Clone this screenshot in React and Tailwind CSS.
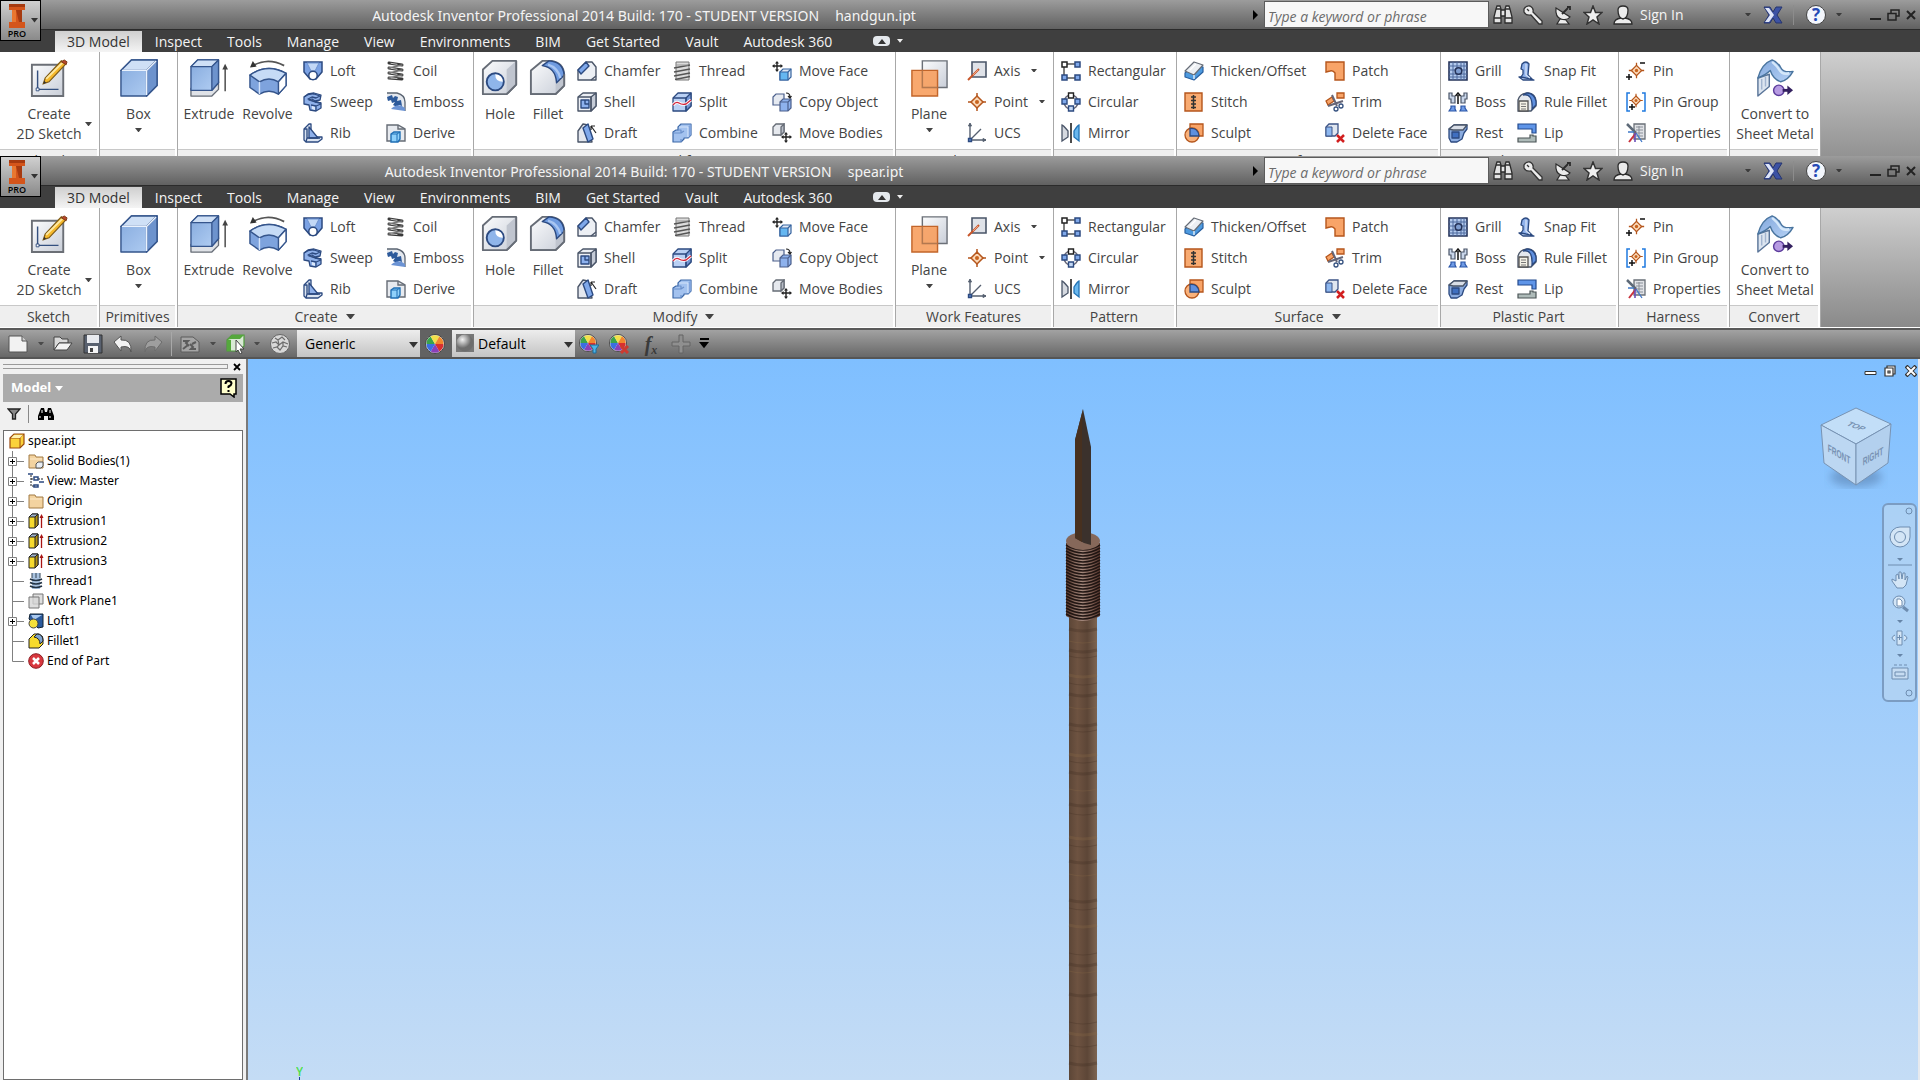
import { useState } from 'react'

const NAVY = '#2c4a80'
const SLATE = '#4a5568'
const RUST = '#b5561c'

/* ---------- 20px ribbon icons ---------- */

const cursorCross = (
  <path
    d="M5 0l2 2.500H5.700V4.300H8.500V3L11 5 8.500 7V5.700H5.700V8.500H7L5 11 3 8.500h1.300V5.700H2.500V7L0 5l2.500-2v1.300h1.800V2.500H3z"
    fill="#222"
  />
)

const target = (
  <g>
    <path d="M10 1v18M1 10h18" stroke={RUST} strokeWidth="1.500" />
    <path d="M10 4l6 6-6 6-6-6z" fill="#fcd9b8" stroke={RUST} strokeWidth="1.500" />
    <circle cx="10" cy="10" r="2" fill="#c8641f" />
  </g>
)

const ICONS = {
  loft: (
    <g stroke={NAVY} strokeWidth="1.500">
      <path d="M1 1h18v10l-6 7H7l-6-7z" fill="#7ba2e4" />
      <path d="M4 2h12l-4 8H8z" fill="#c3d8f6" stroke="#6f93cf" strokeWidth="1" />
      <circle cx="10" cy="14.500" r="4.200" fill="#fff" />
    </g>
  ),
  sweep: (
    <g strokeWidth="1.300" stroke={NAVY} strokeLinejoin="round">
      <path d="M1 5l4-3 6-1 7 2-1 5-5 1-3-2-3 1 6 2 6 1v5l-5 3-6-1-1-5-5-1z" fill="#8fb1ea" />
      <path d="M1 5q5-4 10-3l6 2-4 2-4-1-4 2 8 3 5 1" fill="none" />
      <path d="M8 13l5 1 5-2M13 14v5" fill="none" />
      <path d="M9 14l3 1v3l-3-1z" fill="#dce9fb" stroke="none" />
    </g>
  ),
  rib: (
    <g stroke={NAVY} strokeWidth="1.300" strokeLinejoin="round">
      <path d="M1 6l5-5h2v9l6 4h5v2l-4 3H3l-2-2z" fill="#dbe4f1" />
      <path d="M6 4l9 11H6z" fill="#8eb0ea" />
      <path d="M1 6h3v9l-1 4M4 15h13" fill="none" />
    </g>
  ),
  coil: (
    <g fill="none" strokeLinecap="round">
      <path d="M3 2l13 2M3 7l13 2M3 12l13 2M3 17l13 1" stroke="#3a3a3a" strokeWidth="3" />
      <path d="M16 4L3 7M16 9L3 12M16 14L3 17" stroke="#777" strokeWidth="1.500" />
      <path d="M5 2.300l6 1M5 7.300l6 1M5 12.300l6 1M5 17l6 .5" stroke="#c4c4c4" strokeWidth="1" />
    </g>
  ),
  emboss: (
    <g>
      <path d="M1 1h10q8 2 8 9v9q-6-10-18-11z" fill="#e4e8ee" />
      <path d="M1 1h10q8 2 8 9v9" fill="none" stroke="#5a6472" strokeWidth="1.300" />
      <path d="M1 5l5-2 1 3 2-2 3 1-1 4 4-1 1 6-3-1-2 2-4-2 2-3-3 1-1-3-3 1z" fill="#2d5a9b" />
      <path d="M5 17q7-7 14-1v3z" fill="#6b93d4" />
    </g>
  ),
  derive: (
    <g strokeWidth="1.400">
      <path d="M1 2h11l7 4v12H1z" fill="#e7eaef" stroke="#666c76" />
      <path d="M12 2v4h7" stroke="#666c76" fill="none" />
      <path d="M5 11l3-2h6v7l-2 3H5z" fill="#8fd1fb" stroke="#1f6fb5" />
      <path d="M5 11h6l3-2M11 11v8" stroke="#1f6fb5" fill="none" strokeWidth="1" />
    </g>
  ),
  chamfer: (
    <g stroke={SLATE} strokeWidth="1.400" strokeLinejoin="round">
      <path d="M1 9l8-8h6l4 5v13H1z" fill="#eceff4" />
      <path d="M1 9l8-8 3 4-8 8z" fill="#7fa8ea" stroke={NAVY} />
      <path d="M14 19l5-4" />
    </g>
  ),
  shell: (
    <g stroke={SLATE} strokeWidth="1.400" strokeLinejoin="round">
      <path d="M1 5l5-4h13v13l-5 5H1z" fill="#eceff4" />
      <path d="M14 5l5-4v13l-5 5z" fill="#c5cbd6" />
      <path d="M1 5h13v14" fill="none" />
      <path d="M4 8h8v8H4z" fill="#8db1ee" stroke={NAVY} />
      <path d="M8 8v4h4" stroke={NAVY} fill="none" />
    </g>
  ),
  draft: (
    <g stroke={SLATE} strokeWidth="1.400" strokeLinejoin="round">
      <path d="M1 8l5-7 5 1 4 17H1z" fill="#e3e7ee" />
      <path d="M6 5l5-4 5 15-5 3z" fill="#7fa8ea" stroke={NAVY} />
      <path d="M14 3l5 7M14 3h4M14 3v4" stroke="#222" fill="none" strokeWidth="1.200" />
    </g>
  ),
  thread: (
    <g>
      <path d="M4 1h13v18H4z" fill="#dcdcdc" stroke="#777" />
      <path d="M2 7l16-3M2 11l16-3M2 15l16-3M3 18.500l15-3" stroke="#555" strokeWidth="1.400" />
      <path d="M4 4h12" stroke="#999" />
    </g>
  ),
  split: (
    <g stroke={NAVY} strokeWidth="1.300" strokeLinejoin="round">
      <path d="M1 6l5-5h13v13l-5 5H1z" fill="#b9d0f4" />
      <path d="M14 6l5-5v13l-5 5z" fill="#7596d4" />
      <path d="M1 6h13v13" fill="none" />
      <path d="M1 13q3-4 6-2t7 1l5-4" fill="none" stroke="#fff" strokeWidth="3" />
      <path d="M1 13q3-4 6-2t7 1l5-4" fill="none" stroke="#d3263d" strokeWidth="1.300" />
    </g>
  ),
  combine: (
    <g stroke="#3c68a8" strokeWidth="1.200" strokeLinejoin="round">
      <path d="M6 4l3-3h10v11l-3 3h-4v1l-3 3H1V9l3-2h2z" fill="#a3c2ef" />
      <path d="M16 4l3-3v11l-3 3z" fill="#7fa3dc" stroke="none" />
      <path d="M6 7h3v3h-8M9 10l3-2M9 16v3" fill="none" stroke="#6a90cb" />
      <path d="M7 4h9v10" fill="none" stroke="#d5e4fa" />
    </g>
  ),
  moveFace: (
    <g>
      {cursorCross}
      <g stroke="#34639f" strokeWidth="1.200">
        <path d="M8 11l3-3h8v8l-3 3H8z" fill="#dfe8f5" />
        <path d="M8 11h8v8H8z" fill="#65b7f1" />
        <path d="M16 11l3-3" />
      </g>
    </g>
  ),
  copyObject: (
    <g stroke="#4b5f8c" strokeWidth="1.200">
      <path d="M1 5l3-3h8v8l-3 3H1z" fill="#e6eaf1" />
      <path d="M8 10l3-3h8v9l-3 3H8z" fill="#8eb2ed" />
      <path d="M8 10h8v9M16 10l3-3" fill="none" />
      <path d="M14 1q4 0 4 4M16 4l2 2 1.500-2" fill="none" stroke="#222" />
    </g>
  ),
  moveBodies: (
    <g>
      <g stroke="#666c76" strokeWidth="1.300">
        <path d="M1 4l3-3h8v8l-3 3H1z" fill="#e6e9ee" />
        <path d="M9 4l3-3v8l-3 3z" fill="#b8bdc7" />
      </g>
      <g transform="translate(9 9)">{cursorCross}</g>
    </g>
  ),
  axis: (
    <g>
      <path d="M5 1h14v15H5z" fill="#dfe2e8" stroke={SLATE} strokeWidth="1.600" />
      <path d="M1 19L12 8" stroke="#c8562a" strokeWidth="2" />
      <path d="M6 14l5-5" stroke="#f0a080" />
    </g>
  ),
  point: target,
  ucs: (
    <g stroke="#566070" fill="none" strokeWidth="1.400">
      <path d="M3 1v16h16M3 17L14 6" />
      <path d="M1.500 3L3 0l1.500 3zM16 15.500l3 1.500-3 1.500z" fill="#566070" strokeWidth="1" />
      <path d="M1.500 15.500h3v3h-3z" fill="#5f86cc" stroke={NAVY} />
    </g>
  ),
  rectangular: (
    <g stroke={NAVY} strokeWidth="1.500">
      <path d="M4 3h12M4 17h12M3 4v12" stroke="#555" />
      <path d="M1 1h5v5H1z" fill="#fff" stroke="#222" />
      <path d="M14 1h5v5h-5zM1 14h5v5H1zM14 14h5v5h-5z" fill="#7fa8ea" />
    </g>
  ),
  circular: (
    <g stroke={NAVY} strokeWidth="1.400">
      <circle cx="10" cy="10" r="7" fill="none" stroke="#667" />
      <path d="M7.500 1h5v5h-5z" fill="#fff" stroke="#222" />
      <path d="M1 7h5v5H1zM14 7h5v5h-5z" fill="#7fa8ea" />
      <path d="M7.500 14h5v5h-5z" fill="#c3d8f6" />
    </g>
  ),
  mirror: (
    <g strokeWidth="1.300">
      <path d="M1 2q1 0 6 6v6l-6 4z" fill="#d5d9e0" stroke={SLATE} />
      <path d="M18 2q-1 0-5 6v6l5 4z" fill="#69b7ee" stroke="#2273b5" />
      <path d="M10 0v20" stroke="#111" strokeWidth="1.500" />
    </g>
  ),
  thicken: (
    <g strokeWidth="1.200" strokeLinejoin="round">
      <path d="M1 12l9-8 9 2v5l-9 8-9-3z" fill="#4d9adf" stroke="#2a5f9e" />
      <path d="M1 10l9-9 9 3-9 10z" fill="#eceff3" stroke="#666c76" />
      <path d="M10 14v4M6 9l6-6" stroke="#fff" />
    </g>
  ),
  stitch: (
    <g>
      <path d="M1 1h17v18H1z" fill="#f8ab72" stroke={RUST} strokeWidth="1.400" />
      <path d="M9.500 3v14" stroke="#333" strokeWidth="1.500" />
      <path d="M7 5h5M7 8.500h5M7 12h5M7 15.500h5" stroke="#333" strokeWidth="1.300" />
    </g>
  ),
  sculpt: (
    <g strokeWidth="1.300">
      <path d="M6 1h13v12H6z" fill="#f8a468" stroke={RUST} />
      <circle cx="8" cy="12" r="7" fill="#f9b27c" stroke={RUST} />
      <path d="M6 5.500q8-1 9 7.500H6z" fill="#5f90df" stroke={NAVY} />
    </g>
  ),
  patch: <path d="M1 1h18v18h-9v-7q-2-3-5-2l-4 1z" fill="#f8a468" stroke={RUST} strokeWidth="1.400" />,
  trim: (
    <g strokeWidth="1.300">
      <path d="M12 1h7v5h-7zM1 9l6-4 2 4-6 4z" fill="#f8a468" stroke={RUST} />
      <path d="M7 3l5 11M3 14L18 9" stroke="#667" strokeWidth="2" />
      <circle cx="11" cy="17" r="2" fill="#fff" stroke="#34507f" />
      <circle cx="16" cy="14" r="2" fill="#fff" stroke="#34507f" />
    </g>
  ),
  deleteFace: (
    <g>
      <path d="M1 4l3-3h9v9l-3 3H1z" fill="#dfe6f0" stroke="#3c5487" strokeWidth="1.300" />
      <path d="M1 4h6v9H1z" fill="#8db7ef" stroke="#3c5487" />
      <path d="M12 12l7 7M19 12l-7 7" stroke="#d21f1f" strokeWidth="2.500" />
    </g>
  ),
  grill: (
    <g>
      <path d="M1 1h18v18H1z" fill="#b4cbee" stroke="#26345a" strokeWidth="1.600" />
      <path d="M5 1v18M9 1v18M13 1v18M16 1v18M1 5h18M1 9h18M1 13h18M1 16h18" stroke="#4c689c" />
      <circle cx="10.500" cy="10" r="3.300" fill="#7e9dd0" stroke="#26345a" strokeWidth="1.600" />
    </g>
  ),
  boss: (
    <g strokeWidth="1.200">
      <path d="M1 1h3v3h3v7H3V7H1zM19 1h-3v3h-3v7h4V7h2z" fill="#c9d6ea" stroke={SLATE} />
      <path d="M3 14h4v3l1 2H1l2-3zM17 14h-4v3l-1 2h7l-2-3z" fill="#6f9be6" stroke="#2b56a8" />
      <path d="M10 12V3M7.500 4L10 1l2.500 3" stroke="#111" fill="none" strokeWidth="1.500" />
    </g>
  ),
  rest: (
    <g strokeWidth="1.300" strokeLinejoin="round">
      <path d="M1 6l5-4h13v4l-3 4-2 6-5 3H3l-2-4z" fill="#8aabdf" stroke={NAVY} />
      <path d="M1 6l5-4h13l-4 5H5z" fill="#d9dee7" stroke={SLATE} />
      <path d="M4 9h7v6H4z" fill="#3f6fc0" stroke={NAVY} />
    </g>
  ),
  snapFit: (
    <g stroke={NAVY} strokeWidth="1.300" strokeLinejoin="round">
      <path d="M2 16h6l9 3H6z" fill="#c3d6f3" />
      <path d="M5 3q4-4 7 0l-1 11 4 4-6-1-5-1 2-3V9L4 8z" fill="#8fb1ea" />
      <path d="M9 3v11l4 3" stroke="#d6e3f7" fill="none" />
    </g>
  ),
  ruleFillet: (
    <g strokeWidth="1.300">
      <path d="M1 8q2-7 10-7 8 1 8 9v4l-5 5H1z" fill="#e4e8ee" stroke={SLATE} />
      <path d="M6 3q10-2 9 14l4-4V9Q17 1 10 1z" fill="#5f90df" stroke={NAVY} />
      <path d="M2 9h9v10H2z" fill="#f4f1e6" stroke="#555" />
      <path d="M4 12h5M4 14.500h5M4 17h5" stroke="#777" strokeWidth="1" />
    </g>
  ),
  lip: (
    <g strokeWidth="1.200">
      <path d="M1 1h18v9h-4V6H1z" fill="#5f95e8" stroke="#234a8e" />
      <path d="M1 19v-4h12v-3h3v1h3v6z" fill="#aebbb9" stroke="#4b5557" />
    </g>
  ),
  pin: (
    <g>
      <g transform="translate(2 1) scale(.85)">{target}</g>
      <path d="M0 16h6M3 13v6M14 2h5" stroke="#111" strokeWidth="1.500" />
    </g>
  ),
  pinGroup: (
    <g>
      <g transform="translate(2.500 1) scale(.75)">{target}</g>
      <path d="M4 1H1v18h3M16 1h3v18h-3" fill="none" stroke="#1f7ae0" strokeWidth="1.500" />
      <path d="M3 15h6M6 12v6" stroke="#111" strokeWidth="1.500" />
    </g>
  ),
  properties: (
    <g>
      <path d="M8 1h11v15H8z" fill="#e0e2e6" stroke="#6a7078" strokeWidth="1.300" />
      <path d="M10 4h7M10 7h7M10 10h7M10 13h7M13 3v12" stroke="#8a9099" />
      <path d="M1 1l9 9" stroke="#5e6a78" strokeWidth="2.500" />
      <path d="M10 10l-7 9" stroke="#c9323c" strokeWidth="2" />
      <path d="M9 10v9" stroke="#6a4fb8" strokeWidth="1.600" />
      <path d="M10 10l6 9M2 9h6" stroke="#3f78c8" strokeWidth="1.300" />
    </g>
  ),
}

/* ---------- 40px ribbon icons ---------- */

const BIG_ICONS = {
  sketch: (
    <g>
      <path d="M2 6h33v33H2z" fill="url(#steel)" stroke="#6b6f76" strokeWidth="2" />
      <path d="M8 12v20h22" fill="none" stroke="#34507f" strokeWidth="1.500" />
      <path d="M6.500 30.500h3v3h-3z" fill="#fff" stroke="#34507f" />
      <path d="M14 26l2-6L33 2l5 3-18 19z" fill="#f6b92c" stroke="#7d5a17" strokeWidth="1.300" />
      <path d="M17 21L34 4" stroke="#fde9a3" strokeWidth="2" />
      <path d="M33 3l3-2 3 2-1 3z" fill="#b6472c" stroke="#7d3a17" />
      <path d="M14 26l1-3 2 2z" fill="#333" />
    </g>
  ),
  box: (
    <g stroke="#35558c" strokeWidth="1.500" strokeLinejoin="round">
      <path d="M1 12L12 1h27v27L28 39H1z" fill="url(#azure)" />
      <path d="M1 12L12 1h27L28 12z" fill="#cfe0f6" />
      <path d="M28 12L39 1v27L28 39z" fill="#6d93cd" />
      <path d="M2 12h26v26M28 12L38 2" fill="none" stroke="#eaf2fd" strokeWidth="1.500" />
    </g>
  ),
  extrude: (
    <g strokeWidth="1.400" strokeLinejoin="round">
      <path d="M1 31h22l7-7v8l-7 7H1z" fill="#dfe2e7" stroke="#666c76" />
      <path d="M1 8l7-7h22v24l-7 8H1z" fill="url(#azure)" stroke="#35558c" />
      <path d="M1 8l7-7h22l-7 7z" fill="#cfe0f6" stroke="#35558c" />
      <path d="M23 8l7-7v24l-7 8z" fill="#6d93cd" stroke="#35558c" />
      <path d="M37 34V8" stroke="#444" strokeWidth="1.500" />
      <path d="M34 11l3-6 3 6z" fill="#444" />
    </g>
  ),
  revolve: (
    <g strokeWidth="1.500" strokeLinejoin="round">
      <path d="M4 7q16-9 33 0" fill="none" stroke="#555" strokeWidth="2" />
      <path d="M1 9l3-7 4 6z" fill="#333" />
      <path d="M1 17Q19 4 39 15v13l-8 9q-10-6-20 0L1 30z" fill="#7ea3dd" stroke="#35558c" />
      <path d="M1 17Q19 4 39 15l-8 9q-10-6-20 0z" fill="#c6dbf6" stroke="#35558c" />
      <path d="M31 24l8-9v13l-8 9z" fill="#fff" stroke="#35558c" />
      <path d="M11 24v13" stroke="#d5e4fa" />
    </g>
  ),
  hole: (
    <g stroke="#666c76" strokeWidth="2" strokeLinejoin="round">
      <path d="M2 11l10-9h25v25l-10 10H2z" fill="url(#steel)" />
      <path d="M27 11l10-9v25L27 37z" fill="#c0c5cf" stroke="none" />
      <path d="M37 2v25L27 37" fill="none" />
      <circle cx="15" cy="24" r="9" fill="#8fb5ea" stroke={NAVY} />
      <path d="M15 16q8 1 8 8-8 0-8-8z" fill="#fff" stroke="none" />
    </g>
  ),
  fillet: (
    <g stroke="#666c76" strokeWidth="2" strokeLinejoin="round">
      <path d="M2 12L14 2h10q12 2 13 14v12l-9 9H2z" fill="url(#steel)" />
      <path d="M28 36V25l9-8v11z" fill="#c0c5cf" stroke="none" />
      <path d="M14 7l7-5q15 1 16 15l-8 8q-1-16-15-18z" fill="#6f9be0" stroke={NAVY} strokeWidth="1.500" />
      <path d="M20 6q10 3 13 14" fill="none" stroke="#a9c6f2" strokeWidth="2.500" />
      <path d="M37 16v12l-9 9H2" fill="none" />
    </g>
  ),
  plane: (
    <g strokeWidth="1.500">
      <path d="M13 2h26v28H13z" fill="url(#steel)" stroke="#6b7078" />
      <path d="M2 12h27v27H2z" fill="#f79e5e" fillOpacity=".9" stroke="#c2652a" />
      <path d="M13 12v18h16" fill="none" stroke="#b3784f" />
    </g>
  ),
  convert: (
    <g strokeWidth="1.500" strokeLinejoin="round">
      <path d="M2 20v19l12-10V16z" fill="#dce5f0" stroke="#5a7599" />
      <path d="M6 21v11M10 19v10" stroke="#a2b5cf" />
      <path d="M2 20Q6 5 17 1q6 2 9 8t13 4q-5 9-13 11-8-3-11-12-4 4-13 8z" fill="url(#azure)" stroke="#4a759f" />
      <path d="M17 3q5 4 8 9t10 3" fill="none" stroke="#d5e8fa" strokeWidth="2.500" />
      <circle cx="24" cy="33" r="5.500" fill="#b79be2" stroke="#5c3c9c" />
      <path d="M28 33h7" stroke="#33205f" strokeWidth="3" />
      <path d="M33 28l6 5-6 5z" fill="#33205f" />
    </g>
  ),
}

/* ---------- ribbon data ---------- */

const TABS = ['3D Model', 'Inspect', 'Tools', 'Manage', 'View', 'Environments', 'BIM', 'Get Started', 'Vault', 'Autodesk 360']

const PANELS = [
  { name: 'Sketch', width: 'w-[100px]', big: [{ icon: 'sketch', label: ['Create', '2D Sketch'], width: 'w-[97px]', side: true }] },
  { name: 'Primitives', width: 'w-[78px]', big: [{ icon: 'box', label: ['Box'], width: 'w-full', below: true }] },
  {
    name: 'Create',
    width: 'w-[296px]',
    pad: 'pl-[3px]',
    more: true,
    big: [
      { icon: 'extrude', label: ['Extrude'], width: 'w-[56px]' },
      { icon: 'revolve', label: ['Revolve'], width: 'w-[61px]' },
    ],
    columns: [
      { width: 'w-[83px]', items: [['loft', 'Loft'], ['sweep', 'Sweep'], ['rib', 'Rib']] },
      { width: 'w-[86px]', items: [['coil', 'Coil'], ['emboss', 'Emboss'], ['derive', 'Derive']] },
    ],
  },
  {
    name: 'Modify',
    width: 'w-[422px]',
    pad: 'pl-0.5',
    more: true,
    big: [
      { icon: 'hole', label: ['Hole'], width: 'w-[48px]' },
      { icon: 'fillet', label: ['Fillet'], width: 'w-[48px]' },
    ],
    columns: [
      { width: 'w-[95px]', items: [['chamfer', 'Chamfer'], ['shell', 'Shell'], ['draft', 'Draft']] },
      { width: 'w-[100px]', items: [['thread', 'Thread'], ['split', 'Split'], ['combine', 'Combine']] },
      { width: 'w-[120px]', items: [['moveFace', 'Move Face'], ['copyObject', 'Copy Object'], ['moveBodies', 'Move Bodies']] },
    ],
  },
  {
    name: 'Work Features',
    width: 'w-[158px]',
    big: [{ icon: 'plane', label: ['Plane'], width: 'w-[66px]', below: true }],
    columns: [{ width: 'w-[86px]', items: [['axis', 'Axis', true], ['point', 'Point', true], ['ucs', 'UCS']] }],
  },
  {
    name: 'Pattern',
    width: 'w-[123px]',
    pad: 'pl-0.5',
    columns: [{ width: 'w-[115px]', items: [['rectangular', 'Rectangular'], ['circular', 'Circular'], ['mirror', 'Mirror']] }],
  },
  {
    name: 'Surface',
    width: 'w-[264px]',
    pad: 'pl-0.5',
    more: true,
    columns: [
      { width: 'w-[141px]', items: [['thicken', 'Thicken/Offset'], ['stitch', 'Stitch'], ['sculpt', 'Sculpt']] },
      { width: 'w-[115px]', items: [['patch', 'Patch'], ['trim', 'Trim'], ['deleteFace', 'Delete Face']] },
    ],
  },
  {
    name: 'Plastic Part',
    width: 'w-[178px]',
    pad: 'pl-0.5',
    columns: [
      { width: 'w-[69px]', items: [['grill', 'Grill'], ['boss', 'Boss'], ['rest', 'Rest']] },
      { width: 'w-[101px]', items: [['snapFit', 'Snap Fit'], ['ruleFillet', 'Rule Fillet'], ['lip', 'Lip']] },
    ],
  },
  {
    name: 'Harness',
    width: 'w-[111px]',
    pad: 'pl-0.5',
    columns: [{ width: 'w-[103px]', items: [['pin', 'Pin'], ['pinGroup', 'Pin Group'], ['properties', 'Properties']] }],
  },
  { name: 'Convert', width: 'w-[91px]', big: [{ icon: 'convert', label: ['Convert to', 'Sheet Metal'], width: 'w-full' }] },
]

function Caret({ className = 'w-[7px] text-[#444]' }) {
  return (
    <svg viewBox="0 0 8 5" className={`shrink-0 ${className}`} aria-hidden="true">
      <path d="M0 0h8L4 5z" fill="currentColor" />
    </svg>
  )
}

function BigButton({ icon, label, width, side, below }) {
  return (
    <button type="button" className={`flex shrink-0 flex-col items-center pt-[7px] ${width}`}>
      <svg viewBox="0 0 40 40" className="size-[38px]" aria-hidden="true">
        {BIG_ICONS[icon]}
      </svg>
      <span className={`mt-[7px] flex items-center gap-1 ${side ? 'pl-3' : ''}`}>
        <span className="leading-5 whitespace-nowrap">
          {label.map((line) => (
            <span key={line} className="block">
              {line}
            </span>
          ))}
        </span>
        {side && <Caret />}
      </span>
      {below && <Caret className="mt-1 w-[7px] text-[#444]" />}
    </button>
  )
}

function Panel({ name, width, pad = '', more, big = [], columns = [] }) {
  return (
    <section className={`flex shrink-0 flex-col border-r border-[#a8a8a8] bg-white ${width}`}>
      <div className={`flex h-[97px] ${pad}`}>
        {big.map((b) => (
          <BigButton key={b.icon} {...b} />
        ))}
        {columns.length > 0 && (
          <div className="ml-[5px] flex">
            {columns.map(({ width: colWidth, items }) => (
              <div key={items[0][0]} className={`flex shrink-0 flex-col pt-[3px] ${colWidth}`}>
                {items.map(([icon, label, menu]) => (
                  <button key={icon} type="button" className="flex h-[31px] items-center whitespace-nowrap">
                    <svg viewBox="0 0 20 20" className="mr-[7px] size-5 shrink-0" aria-hidden="true">
                      {ICONS[icon]}
                    </svg>
                    {label}
                    {menu && <Caret className="ml-[11px] w-[6px] text-[#444]" />}
                  </button>
                ))}
              </div>
            ))}
          </div>
        )}
      </div>
      <h2 className="mr-0.5 flex h-[22px] items-center justify-center gap-2 border-t border-[#c8c8c8] bg-[#efefef]">
        {name}
        {more && <Caret className="w-[9px] text-[#444]" />}
      </h2>
    </section>
  )
}

/* ---------- title bar ---------- */

function TitleIcon({ label, children, className = 'size-5' }) {
  return (
    <button type="button" aria-label={label} className="shrink-0">
      <svg viewBox="0 0 20 20" className={className} aria-hidden="true">
        {children}
      </svg>
    </button>
  )
}

function TitleTools() {
  return (
    <div className="flex w-[673px] shrink-0 items-center">
      <svg viewBox="0 0 5 10" className="ml-1.5 h-[10px] w-[5px]" aria-hidden="true">
        <path d="M0 0l5 5-5 5z" fill="#000" />
      </svg>
      <input
        type="text"
        aria-label="Search help"
        placeholder="Type a keyword or phrase"
        className="ml-1.5 h-[27px] w-[225px] shrink-0 border border-[#5c5c5c] bg-[#f7f7f7] pt-1 pl-[3px] text-[14px] italic placeholder:text-[#6b6b6b]"
      />
      <div className="ml-1 flex items-center gap-2.5">
        <TitleIcon label="Search">
          <g fill="#e4e4e4" stroke="#2c2c2c" strokeWidth="1.300">
            <path d="M3 4l1-3h3l1 3v14H1v-6zM17 4l-1-3h-3l-1 3v14h7v-6z" />
            <path d="M8 5h4v6H8z" />
            <path d="M1 13h7M12 13h7M3 4h5M12 4h5" />
          </g>
        </TitleIcon>
        <TitleIcon label="Subscription center">
          <path
            d="M1 4q2-4 6-3 4 2 3 6l9 9v3h-3l-8-9q-5 1-7-3zM4 4l2 2"
            fill="#ececec"
            stroke="#333"
            strokeWidth="1.300"
          />
        </TitleIcon>
        <TitleIcon label="Communication center">
          <g fill="#ececec" stroke="#2c2c2c" strokeWidth="1.200">
            <path d="M7 14l-3 5h12l-4-5z" />
            <path d="M3 3q-1 9 5 11t9-2z" />
            <path d="M9 9l6-6M14 2h3v3" fill="none" strokeWidth="1.800" />
          </g>
        </TitleIcon>
        <TitleIcon label="Favorites">
          <path d="M10 1l2.500 6.500H19l-5 4.500 2 7-6-4-6 4 2-7-5-4.500h6.500z" fill="#f0f0f0" stroke="#333" strokeWidth="1.500" />
        </TitleIcon>
        <button type="button" className="flex items-center gap-[7px] text-[#f4f4f4]">
          <svg viewBox="0 0 20 20" className="size-5" aria-hidden="true">
            <g fill="#ececec" stroke="#2c2c2c" strokeWidth="1.300">
              <path d="M1 19q0-5 7-6h4q7 1 7 6z" />
              <path d="M5 5q0-4 5-4t5 4q0 8-5 9-5-1-5-9z" />
            </g>
          </svg>
          Sign In
        </button>
      </div>
      <Caret className="ml-auto w-[6px] text-[#3c3c3c]" />
      <div className="ml-3 flex items-center">
        <TitleIcon label="Exchange apps">
          <path d="M1 2h6l3 5 3-5h6l-5 8 5 8h-6l-3-5-3 5H1l5-8z" fill="#3c52a4" stroke="#26356e" />
          <path d="M2 3h4l5 7-5 7H2l5-7z" fill="#dfe6f8" />
        </TitleIcon>
        <span className="ml-2.5 h-5 w-px bg-[#8c8c8c]" />
        <button
          type="button"
          aria-label="Help"
          className="ml-3 flex size-5 items-center justify-center rounded-full border border-[#444] bg-[#f3f6fc] text-[17px] leading-none font-bold text-[#2449b5]"
        >
          ?
        </button>
        <Caret className="ml-2.5 w-[6px] text-[#3c3c3c]" />
      </div>
      <div className="mr-1 ml-7 flex items-center gap-1.5 text-[#222]">
        <button type="button" aria-label="Minimize">
          <svg viewBox="0 0 11 12" className="h-3 w-[11px]"><path d="M0 9h11v2H0z" fill="currentColor" /></svg>
        </button>
        <button type="button" aria-label="Restore">
          <svg viewBox="0 0 13 12" className="h-3 w-[13px]" fill="none" stroke="currentColor" strokeWidth="1.500">
            <path d="M4 4V1h8v6H9M1 4.500h8v6.500H1z" />
          </svg>
        </button>
        <button type="button" aria-label="Close">
          <svg viewBox="0 0 10 12" className="h-3 w-[10px]" stroke="currentColor" strokeWidth="2">
            <path d="M1 2l8 8M9 2l-8 8" />
          </svg>
        </button>
      </div>
    </div>
  )
}

function AppHeader({ file }) {
  const [tab, setTab] = useState('3D Model')

  return (
    <header>
      <div className="flex bg-[#3f3f3f]">
        <button
          type="button"
          aria-label="Application menu"
          className="flex h-[41px] w-[41px] shrink-0 items-center border border-black bg-linear-to-b from-[#d0d0d0] to-[#8a8a8a]"
        >
          <span className="flex w-[38px] flex-col items-center pl-0.5">
            <svg viewBox="0 0 20 26" className="h-[26px] w-5" aria-hidden="true">
              <path d="M2 1h16v6h-3v12h3v6H2v-6h3V7H2z" fill="#d4551b" />
              <path d="M2 1h16v3H2zM9 7h6v12h-3z" fill="#a63a10" />
              <path d="M5 7h4v12H5z" fill="#e9772f" />
            </svg>
            <span className="text-[9px] leading-[9px] font-semibold text-black">PRO</span>
          </span>
          <Caret className="mr-0.5 w-[7px] text-[#333]" />
        </button>
        <div className="min-w-0 flex-1">
          <div className="flex h-[30px] border-b border-[#2b2b2b] bg-linear-to-b from-[#9c9c9c] to-[#616161]">
            <h1 className="flex flex-1 items-center justify-center gap-4 pt-0.5 font-['Noto_Sans',sans-serif] whitespace-nowrap text-[#f4f4f4]">
              <span>Autodesk Inventor Professional 2014 Build: 170 - STUDENT VERSION</span>
              <span>{file}</span>
            </h1>
            <TitleTools />
          </div>
          <nav className="flex h-[22px] items-end gap-px pl-3.5">
            {TABS.map((name) => (
              <button
                key={name}
                type="button"
                onClick={() => setTab(name)}
                className={
                  name === tab
                    ? 'h-[21px] bg-linear-to-b from-[#cfcfcf] to-[#f4f4f4] px-3 leading-5 text-[#333]'
                    : 'h-[21px] px-3 leading-5 text-[#f4f4f4]'
                }
              >
                {name}
              </button>
            ))}
            <button type="button" aria-label="Minimize ribbon" className="mb-1.5 ml-7 flex items-center gap-[7px]">
              <span className="flex h-[10px] w-[17px] items-center justify-center rounded-sm bg-[#e4e8ec]">
                <Caret className="w-[8px] rotate-180 text-[#333]" />
              </span>
              <Caret className="w-[6px] text-[#eee]" />
            </button>
          </nav>
        </div>
      </div>
      <div className="flex border-b border-white bg-linear-to-b from-[#cfcfcf] to-[#8a8a8a] text-[#444]">
        {PANELS.map((p) => (
          <Panel key={p.name} {...p} />
        ))}
      </div>
    </header>
  )
}

/* ---------- quick access bar ---------- */

function QuickIcon({ label, children, className = '' }) {
  return (
    <button type="button" aria-label={label} className={`shrink-0 ${className}`}>
      <svg viewBox="0 0 20 20" className="size-5" aria-hidden="true">
        {children}
      </svg>
    </button>
  )
}

const wheel = (
  <g>
    <circle cx="10" cy="10" r="9.500" fill="#eee" stroke="#444" />
    <path d="M10 10L1.500 10A8.500 8.500 0 0 1 5.700 2.600z" fill="#3aa24b" />
    <path d="M10 10L5.700 2.600A8.500 8.500 0 0 1 14.300 2.600z" fill="#f3e04a" />
    <path d="M10 10L14.300 2.600A8.500 8.500 0 0 1 18.500 10z" fill="#f0862e" />
    <path d="M10 10H18.500A8.500 8.500 0 0 1 14.300 17.400z" fill="#d92f2f" />
    <path d="M10 10L14.300 17.400A8.500 8.500 0 0 1 5.700 17.400z" fill="#8a3fb8" />
    <path d="M10 10L5.700 17.400A8.500 8.500 0 0 1 1.500 10z" fill="#3b6fe0" />
  </g>
)

function QuickBar() {
  return (
    <div className="flex h-[31px] shrink-0 items-center border-t-2 border-b-2 border-t-[#5a5a5a] border-b-[#555] bg-linear-to-b from-[#a2a2a2] to-[#686868] pl-2">
      <QuickIcon label="New">
        <path d="M1 2h13l5 5v11H1z" fill="#f2f2f2" stroke="#555" />
        <path d="M14 2v5h5" fill="#ccc" stroke="#555" />
      </QuickIcon>
      <Caret className="ml-2.5 w-[6px] text-[#4a4a4a]" />
      <QuickIcon label="Open" className="ml-[9px]">
        <path d="M1 3h6l2 2h6v4H6l-5 7z" fill="#d9d9d9" stroke="#444" />
        <path d="M6 9h13l-5 7H1z" fill="#f2f2f2" stroke="#444" />
      </QuickIcon>
      <QuickIcon label="Save" className="ml-2.5">
        <path d="M1 1h18v18H1z" fill="#59616f" stroke="#333" />
        <path d="M4 1h12v8H4z" fill="#e8eaee" />
        <path d="M5 12h10v7H5z" fill="#f5f5f5" />
        <path d="M7 14h3v4H7z" fill="#444" />
      </QuickIcon>
      <QuickIcon label="Undo" className="ml-2.5">
        <path d="M1 8l7-6v4q11-1 10 12-1-7-10-5v4z" fill="#f2f2f2" stroke="#555" />
      </QuickIcon>
      <QuickIcon label="Redo" className="ml-2.5">
        <path d="M19 8l-7-6v4Q1 5 2 18q1-7 10-5v4z" fill="#9e9e9e" stroke="#6c6c6c" />
      </QuickIcon>
      <span className="ml-2 h-6 w-px bg-[#a8a8a8]" />
      <QuickIcon label="Update" className="ml-2">
        <path d="M1 3h12l6 5v10H1z" fill="#a5a5a5" stroke="#5c5c5c" />
        <path d="M3 7h5L6 9l3 3M16 15h-5l2-2-3-3M3 15l5-4M16 8l-4 2" fill="none" stroke="#5c5c5c" strokeWidth="2" />
      </QuickIcon>
      <Caret className="ml-2.5 w-[6px] text-[#4a4a4a]" />
      <QuickIcon label="Select" className="ml-2.5">
        <path d="M1 6l5-5h12v11l-5 5H1z" fill="#d9ead5" stroke="#4f9a3c" strokeWidth="1.200" />
        <path d="M1 6h4v11H1zM1 6l5-5h12l-4 4H5z" fill="#55a83d" />
        <path d="M10 6l8 9h-4l2 4-2 1-2-4-2 2z" fill="#fff" stroke="#444" />
      </QuickIcon>
      <Caret className="ml-2 w-[6px] text-[#4a4a4a]" />
      <QuickIcon label="Materials" className="ml-2.5">
        <circle cx="10" cy="10" r="9.500" fill="#d8d8d8" stroke="#666" />
        <path
          d="M5 4l3 2 4-3 3 3M2 9l4-1 3 3 4-3 5 2M3 14l4-1 3 3 3-4 4 1M8 6l1 5-2 2M13 8l0 4"
          fill="none"
          stroke="#6d6d6d"
          strokeWidth="1.200"
        />
      </QuickIcon>
      <div className="relative ml-[7px] h-[27px] w-[123px] shrink-0">
        <select
          aria-label="Material"
          defaultValue="Generic"
          className="size-full appearance-none bg-linear-to-b from-[#ededed] to-[#c4c4c4] pl-2 text-black"
        >
          <option>Generic</option>
        </select>
        <Caret className="pointer-events-none absolute top-3 right-0.5 w-[9px] text-[#333]" />
      </div>
      <button type="button" aria-label="Appearances" className="flex h-[27px] w-8 shrink-0 items-center justify-center bg-[#626262] pr-0.5">
        <svg viewBox="0 0 20 20" className="size-5" aria-hidden="true">{wheel}</svg>
      </button>
      <div className="relative h-[27px] w-[123px] shrink-0">
        <select
          aria-label="Appearance"
          defaultValue="Default"
          className="size-full appearance-none bg-linear-to-b from-[#ededed] to-[#c4c4c4] pl-[26px] text-black"
        >
          <option>Default</option>
        </select>
        <svg viewBox="0 0 18 18" className="pointer-events-none absolute top-1 left-1 size-[18px]" aria-hidden="true">
          <path d="M0 0h18v18H0z" fill="#777" />
          <circle cx="9" cy="9" r="8.500" fill="url(#ball)" />
        </svg>
        <Caret className="pointer-events-none absolute top-3 right-0.5 w-[9px] text-[#333]" />
      </div>
      <QuickIcon label="Adjust" className="ml-1">
        <g transform="scale(.9)">{wheel}</g>
        <path d="M11 11h9l-3 4v4h-3v-4z" fill="#4db4e6" stroke="#1d6d9c" />
      </QuickIcon>
      <QuickIcon label="Clear" className="ml-2.5">
        <g transform="scale(.9)">{wheel}</g>
        <path d="M12 12l7 7M19 12l-7 7" stroke="#cc3a30" strokeWidth="3" />
      </QuickIcon>
      <button
        type="button"
        aria-label="Parameters"
        className="ml-3 w-5 shrink-0 font-['Liberation_Serif',serif] text-[20px] leading-6 font-bold text-[#3a3a3a] italic"
      >
        f<sub className="text-[12px]">x</sub>
      </button>
      <QuickIcon label="Add" className="ml-2.5">
        <path d="M8 1h4v7h7v4h-7v7H8v-7H1V8h7z" fill="#8f8f8f" stroke="#646464" />
      </QuickIcon>
      <button type="button" aria-label="Customize" className="ml-2 flex flex-col items-center gap-0.5 text-black">
        <span className="h-0.5 w-[9px] bg-black" />
        <Caret className="w-[10px] text-black" />
      </button>
    </div>
  )
}

/* ---------- model browser ---------- */

const folder = (
  <g>
    <path d="M1 2h6l1 2h7v11H1z" fill="#f3d3a0" stroke="#a17a45" />
    <path d="M2 6h12" stroke="#fbe8c8" />
  </g>
)

const extrusion = (
  <g>
    <path d="M1 4l3-3h6v11l-3 3H1z" fill="#f7da2c" stroke="#222" />
    <path d="M7 4l3-3v11l-3 3z" fill="#b08f10" stroke="#222" />
    <path d="M1 4l3-3h6L7 4z" fill="#9fb3c9" stroke="#222" />
    <path d="M13.500 15V3" stroke="#a81414" strokeWidth="1.300" />
    <path d="M11.500 5l2-4 2 4z" fill="#a81414" />
  </g>
)

const TREE = [
  {
    label: 'Solid Bodies(1)',
    open: true,
    icon: (
      <g>
        {folder}
        <path d="M8 11l2-2h5v4l-2 2H8z" fill="#e9edf2" stroke="#555" />
      </g>
    ),
  },
  {
    label: 'View: Master',
    open: true,
    icon: (
      <g fill="none" stroke="#222">
        <path d="M3 2v11h3M3 6h3M10 6h5" strokeDasharray="2 1" />
        <path d="M0 1h5M6 4h4v3H6zM6 12h4v2H6zM11 9h5" stroke="#2c4a80" strokeWidth="1.500" />
      </g>
    ),
  },
  { label: 'Origin', open: true, icon: folder },
  { label: 'Extrusion1', open: true, icon: extrusion },
  { label: 'Extrusion2', open: true, icon: extrusion },
  { label: 'Extrusion3', open: true, icon: extrusion },
  {
    label: 'Thread1',
    icon: (
      <g>
        <path d="M4 0h8v16H4z" fill="#a9c3e0" />
        <path d="M4 0v5M8 0v5M12 0v5" stroke="#345" />
        <path d="M2 6q6 3 12 0M2 9.500q6 3 12 0M2 13q6 3 12 0" stroke="#234" strokeWidth="1.700" fill="none" />
      </g>
    ),
  },
  {
    label: 'Work Plane1',
    icon: (
      <g fill="#d6d6d6" fillOpacity=".8" stroke="#777">
        <path d="M5 1h10v10H5z" />
        <path d="M1 4h10v11H1z" />
      </g>
    ),
  },
  {
    label: 'Loft1',
    open: true,
    icon: (
      <g>
        <path d="M2 1h13v13l-5 1-9-9z" fill="#2c5a9c" stroke="#123" />
        <path d="M3 2h11L6 7z" fill="#a9c9f0" />
        <circle cx="5.500" cy="10.500" r="4.500" fill="#f7e13a" stroke="#444" />
      </g>
    ),
  },
  {
    label: 'Fillet1',
    icon: (
      <g>
        <path d="M1 6l5-5h5q5 2 4 6v4l-4 4H1z" fill="#f7da2c" stroke="#222" />
        <path d="M6 4l3-3q6 0 6 7l-3 3q0-6-6-7z" fill="#7fa3cf" stroke="#222" />
      </g>
    ),
  },
  {
    label: 'End of Part',
    icon: (
      <g>
        <circle cx="8" cy="8" r="7.300" fill="#d8383f" stroke="#8e1c22" />
        <path d="M5 5l6 6M11 5l-6 6" stroke="#fff" strokeWidth="2.500" />
      </g>
    ),
  },
]

function TreeNode({ label, open, icon, last }) {
  const joint = (
    <svg viewBox="0 0 18 20" className="h-5 w-[18px]" fill="none" stroke="#808080" aria-hidden="true">
      <path d={last ? 'M5.500 0v10.500H17' : 'M5.500 0v20M5.500 10.500H17'} />
      {open && (
        <g>
          <path d="M1.500 6.500h8v8h-8z" fill="#fff" />
          <path d="M3 10.500h5M5.500 8v5" stroke="#000" />
        </g>
      )}
    </svg>
  )

  return (
    <li className="flex h-5 items-center pl-[3px]">
      {open ? (
        <button type="button" aria-label={`Expand ${label}`}>
          {joint}
        </button>
      ) : (
        joint
      )}
      <svg viewBox="0 0 16 16" className="mr-[3px] ml-[3px] size-4" aria-hidden="true">
        {icon}
      </svg>
      {label}
    </li>
  )
}

function ModelBrowser() {
  return (
    <aside className="flex w-[248px] shrink-0 flex-col border-r-2 border-[#7a7a7a] bg-[#f0f0f0] pr-[3px] pl-[3px]">
      <div className="flex h-[15px] items-center">
        <span className="h-[5px] flex-1 border border-l-0 border-[#9a9a9a]" />
        <button type="button" aria-label="Close panel" className="mr-0.5 ml-[5px]">
          <svg viewBox="0 0 8 8" className="size-2" stroke="#000" strokeWidth="1.800"><path d="M1 1l6 6M7 1l-6 6" /></svg>
        </button>
      </div>
      <div className="flex h-7 items-center justify-between bg-[#ababab] pr-[5px] pl-2">
        <button type="button" className="flex items-center gap-1 font-['Noto_Sans',sans-serif] text-[13px] font-bold text-white">
          Model
          <Caret className="w-[8px] text-white" />
        </button>
        <button type="button" aria-label="Browser help">
          <svg viewBox="0 0 18 20" className="h-5 w-[18px]" aria-hidden="true">
            <path d="M1 1h15v15h-2v3l-4-3H1z" fill="#ffffcc" stroke="#000" strokeWidth="1.500" />
            <path d="M5.500 6q0-3 3-3t3 2.500q0 1.500-3 3V10M8.500 12v2" fill="none" stroke="#000" strokeWidth="2" />
          </svg>
        </button>
      </div>
      <div className="flex h-7 items-center pb-1 pl-1">
        <button type="button" aria-label="Filter">
          <svg viewBox="0 0 14 12" className="h-3 w-[14px]" aria-hidden="true">
            <path d="M1 1h12L8.500 6v5h-3V6z" fill="#8a8a8a" stroke="#222" strokeWidth="1.300" />
          </svg>
        </button>
        <span className="ml-[7px] h-[18px] w-px bg-[#888]" />
        <button type="button" aria-label="Find" className="ml-[9px]">
          <svg viewBox="0 0 16 14" className="h-[14px] w-4" aria-hidden="true">
            <path d="M3 1h3l1 4h2l1-4h3l3 8v4h-6V9H6v4H0V9z" fill="#000" />
            <path d="M4 3v3M2 9v2M12 3v3M12 9v2" stroke="#fff" />
          </svg>
        </button>
      </div>
      <div className="flex-1 border border-[#6e6e6e] bg-white font-['Noto_Sans',sans-serif] text-[12px] text-black">
        <div className="flex h-5 items-center gap-[3px] pl-[5px]">
          <svg viewBox="0 0 16 16" className="size-4" aria-hidden="true">
            <path d="M1 5l4-4h10v10l-4 4H1z" fill="#fbd23a" stroke="#9a4a10" strokeWidth="1.200" />
            <path d="M1 5h10v10M11 5l4-4" fill="none" stroke="#9a4a10" />
            <path d="M2 5l3-3h9l-3 3z" fill="#fff2b0" />
          </svg>
          spear.ipt
        </div>
        <ul>
          {TREE.map((node, i) => (
            <TreeNode key={node.label} {...node} last={i === TREE.length - 1} />
          ))}
        </ul>
      </div>
    </aside>
  )
}

/* ---------- viewport ---------- */

const GRAIN = [6, 18, 27, 33, 52, 60, 71, 84, 101, 107, 131, 138, 149, 166, 181, 190, 214, 222, 238, 251, 277, 285, 302, 330, 341, 348, 371, 399, 410, 422, 440]

function Spear() {
  return (
    <svg viewBox="0 0 36 672" className="mt-[50px] h-[672px] w-9 shrink-0" aria-hidden="true">
      <path d="M4 208h28v464H4z" fill="url(#wood)" />
      {GRAIN.map((y, i) => (
        <path
          key={y}
          d={`M4 ${214 + y}q14 4 28 0`}
          fill="none"
          stroke={i % 3 === 1 ? '#8d6a48' : '#3d2c20'}
          strokeOpacity=".28"
          strokeWidth={i % 2 ? 1 : 3}
        />
      ))}
      <path d="M1 134v73q17 10 34 0v-73z" fill="url(#ferrule)" />
      {Array.from({ length: 24 }, (_, i) => (
        <path key={i} d={`M1 ${136 + i * 3}q17 10 34 0`} fill="none" stroke="#211613" strokeWidth="1.500" />
      ))}
      <ellipse cx="18" cy="132" rx="17" ry="9" fill="#86685a" />
      <path d="M18 0l-8 31v98l9 5 7 2V38z" fill="#3b312c" />
      <path d="M18 0l-8 31v98l7 4V20z" fill="#47301f" />
    </svg>
  )
}

function ViewCube() {
  return (
    <svg viewBox="0 0 76 90" className="h-[90px] w-[76px]" fontFamily="Liberation Sans, Arial, sans-serif">
      <ellipse cx="38" cy="70" rx="26" ry="10" fill="#4c6f98" fillOpacity=".45" filter="url(#soft)" />
      <g stroke="#7893b3" strokeLinejoin="round">
        <path d="M3 18L38 1l35 16-35 20z" fill="#c2def8" />
        <path d="M3 18l35 19v41L6 56z" fill="#bcd7f2" />
        <path d="M73 17L38 37v41l32-22z" fill="#b3d0ee" />
      </g>
      <g fill="#7892b2" fontSize="11" fontWeight="700" textAnchor="middle">
        <text transform="matrix(.8 .3 -.7 .5 36 21)" fontSize="10">TOP</text>
        <text transform="matrix(.6 .34 0 1 21 51)">FRONT</text>
        <text transform="matrix(.6 -.34 0 1 55 53)">RIGHT</text>
      </g>
    </svg>
  )
}

function NavBar() {
  return (
    <div className="flex h-[199px] w-[35px] flex-col items-center rounded-md border-2 border-[#7b9cc2] bg-[#b3d3f3]/80">
      <svg viewBox="0 0 31 195" className="h-[195px] w-[31px]" fill="none" stroke="#6e8db0" role="img" aria-label="Navigation bar">
        <circle cx="25" cy="6" r="3" />
        <path d="M16 22h10v10a10 10 0 1 1-10-10z" fill="#d3e5f6" />
        <circle cx="16" cy="32" r="5.500" />
        <path d="M13 53h6l-3 3zM13 115h6l-3 3zM13 149h6l-3 3z" fill="#6685a8" stroke="none" />
        <path d="M4 60h24" />
        <path d="M8 74l4 2v-6l2-1 1 5V67h2l1 7 1-6h2v7l2-4 1 1-2 8-3 3h-6l-5-7z" fill="#d3e5f6" />
        <circle cx="15" cy="97" r="6" fill="#d3e5f6" />
        <path d="M13 94h3l2 2v5h-5z" fill="#fff" />
        <path d="M19 102l5 4" strokeWidth="3" />
        <path d="M13 126h5v14h-5zM11 130q-6 3 0 6M20 130q6 3 0 6" fill="#d3e5f6" />
        <path d="M15.500 130v5M13 132.500h5" />
        <path d="M8 163h16v11H8zM11 167h10v4H11z" fill="#c6dcf2" />
        <path d="M10 160h3M15 160h3M20 160h3" />
        <circle cx="25" cy="188" r="3" />
      </svg>
    </div>
  )
}

function Viewport() {
  return (
    <main className="relative flex min-w-0 flex-1 justify-center overflow-hidden border-r-2 border-[#e6e9ee] bg-linear-to-b from-[#7fbfff] to-[#c4dcf5]">
      <Spear />
      <div className="absolute top-1.5 right-px flex items-center gap-[7px] text-black">
        <button type="button" aria-label="Minimize view">
          <svg viewBox="0 0 13 12" className="h-3 w-[13px]"><path d="M1 6.500h11v3H1z" fill="#fff" stroke="#333" /></svg>
        </button>
        <button type="button" aria-label="Restore view">
          <svg viewBox="0 0 12 12" className="size-3" fill="#fff" stroke="#333" strokeWidth="1.200">
            <path d="M3 1h8v8H3z" />
            <path d="M1 3h8v8H1zM4 6h2v2H4z" />
          </svg>
        </button>
        <button type="button" aria-label="Close view" className="ml-0.5">
          <svg viewBox="0 0 12 12" className="size-3">
            <path d="M1 1l10 10M11 1L1 11" stroke="#333" strokeWidth="4" />
            <path d="M2 2l8 8M10 2l-8 8" stroke="#fff" strokeWidth="2" />
          </svg>
        </button>
      </div>
      <div className="absolute top-12 right-6">
        <ViewCube />
      </div>
      <div className="absolute top-36 right-px">
        <NavBar />
      </div>
      <span className="absolute bottom-0 left-12 flex h-[13px] flex-col items-center overflow-hidden text-[12px] leading-[10px] font-semibold text-[#4be04b]">
        Y
        <span className="h-1 w-px shrink-0 bg-[#1f3f9a]" />
      </span>
    </main>
  )
}

function Gradients() {
  return (
    <svg className="absolute size-0" aria-hidden="true">
      <defs>
        <linearGradient id="steel" x1="0" y1="0" x2="1" y2="1">
          <stop offset="0" stopColor="#fbfcfd" />
          <stop offset="1" stopColor="#c9ced8" />
        </linearGradient>
        <linearGradient id="azure" x1="0" y1="0" x2="1" y2="1">
          <stop offset="0" stopColor="#84a9dd" />
          <stop offset="1" stopColor="#b4d0f4" />
        </linearGradient>
        <radialGradient id="ball" cx=".35" cy=".3">
          <stop offset="0" stopColor="#f2f2f2" />
          <stop offset="1" stopColor="#6d6d6d" />
        </radialGradient>
        <linearGradient id="wood">
          <stop offset="0" stopColor="#5c4637" />
          <stop offset=".3" stopColor="#6e5341" />
          <stop offset=".65" stopColor="#5d4637" />
          <stop offset="1" stopColor="#7d6552" />
        </linearGradient>
        <linearGradient id="ferrule">
          <stop offset="0" stopColor="#5b3a2f" />
          <stop offset=".45" stopColor="#a58a7e" />
          <stop offset="1" stopColor="#5d3a30" />
        </linearGradient>
        <filter id="soft">
          <feGaussianBlur stdDeviation="4" />
        </filter>
      </defs>
    </svg>
  )
}

export default function App() {
  return (
    <div className="flex h-screen flex-col overflow-hidden bg-[#f0f0f0] font-['Open_Sans',sans-serif] text-[14px]">
      <Gradients />
      <div className="h-[156px] shrink-0 overflow-hidden">
        <AppHeader file="handgun.ipt" />
      </div>
      <div className="shrink-0">
        <AppHeader file="spear.ipt" />
      </div>
      <QuickBar />
      <div className="flex min-h-0 flex-1">
        <ModelBrowser />
        <Viewport />
      </div>
    </div>
  )
}
